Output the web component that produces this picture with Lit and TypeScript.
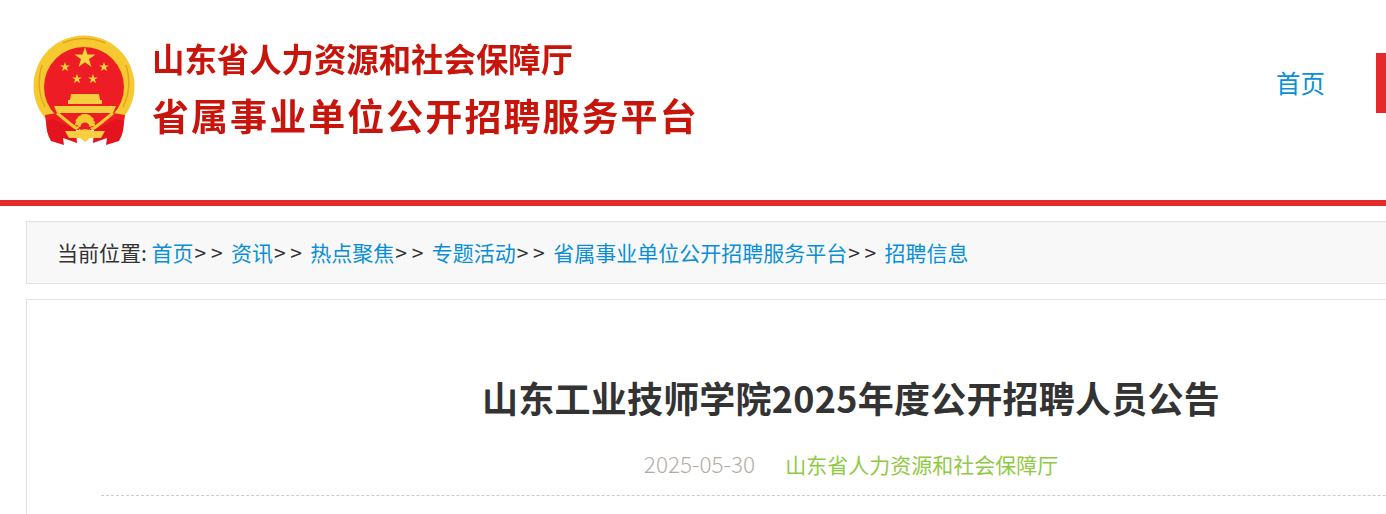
import { LitElement, html, css, svg } from "lit";
import { customElement } from "lit/decorators.js";

const star = (cx: number, cy: number, r: number) => {
  const pts: string[] = [];
  for (let i = 0; i < 10; i++) {
    const rad = i % 2 ? r * 0.382 : r;
    const a = -Math.PI / 2 + (i * Math.PI) / 5;
    pts.push(`${(cx + rad * Math.cos(a)).toFixed(2)},${(cy + rad * Math.sin(a)).toFixed(2)}`);
  }
  return svg`<polygon points=${pts.join(" ")} fill="#fbd33c"/>`;
};

const crumbs = ["首页", "资讯", "热点聚焦", "专题活动", "省属事业单位公开招聘服务平台", "招聘信息"];

@customElement("app-root")
export class AppRoot extends LitElement {
  static styles = css`
    :host {
      display: block;
      width: 1386px;
      height: 514px;
      overflow: hidden;
      background: #fff;
      font-family: "Noto Sans CJK SC", "Noto Sans", sans-serif;
    }
    .page { width: 1702px; }
    .header {
      display: flex;
      align-items: flex-start;
      height: 200px;
      width: 1386px;
    }
    .brand {
      display: flex;
      flex: 1;
      padding: 35px 0 0 33px;
      gap: 17px;
    }
    .emblem { width: 102px; height: 110px; flex: none; filter: blur(0.4px); }
    .names {
      display: flex;
      flex-direction: column;
      color: #c8150c;
      font-weight: 700;
      white-space: nowrap;
      gap: 7px;
      margin-top: -2px;
      filter: blur(0.3px);
    }
    .name1 { font-size: 32.4px; line-height: 50px; }
    .name2 { font-size: 37px; line-height: 52px; letter-spacing: 2.05px; margin-top: -1px; }
    .nav {
      display: flex;
      align-items: flex-start;
      padding-top: 53px;
      width: 110px;
      flex: none;
    }
    .nav a {
      color: #0a8fd6;
      font-size: 24.5px;
      line-height: 60px;
      width: 100px;
      flex: none;
    }
    .nav .active {
      width: 60px;
      height: 60px;
      flex: none;
      background: #e62a2b;
    }
    .rule { height: 6px; background: #e62a2b; }
    .crumb {
      margin: 15px 0 0 26px;
      width: 1650px;
      height: 63px;
      box-sizing: border-box;
      border: 1px solid #e2e2e2;
      background: #f8f8f8;
      padding-left: 30px;
      font-size: 21px;
      line-height: 60px;
      color: #333;
      white-space: nowrap;
    }
    .crumb a { color: #0a8fd6; }
    .sep { margin: 0 8.4px 0 1px; }
    .card {
      margin: 15px 0 0 26px;
      width: 1650px;
      height: 300px;
      box-sizing: border-box;
      border: 1px solid #e2e2e2;
      padding: 0 74px;
    }
    .title {
      margin: 69px 0 0;
      text-align: center;
      font-size: 36px;
      line-height: 56px;
      font-weight: 700;
      letter-spacing: 0.23px;
      color: #333;
    }
    .meta {
      display: flex;
      justify-content: center;
      align-items: baseline;
      gap: 30px;
      margin-top: 21px;
      padding-bottom: 14px;
      border-bottom: 1px dashed #ccc;
      font-size: 21px;
      line-height: 34px;
    }
    .date { color: #b3aca6; font-size: 22.5px; font-weight: 300; }
    .src { color: #8fca45; }
  `;

  render() {
    return html`
      <div class="page">
        <header class="header">
          <div class="brand">
            <svg class="emblem" viewBox="0 0 102 110" aria-hidden="true">
              <defs>
                <clipPath id="upper"><rect x="0" y="0" width="102" height="90"/></clipPath>
              </defs>
              <g clip-path="url(#upper)">
                <circle cx="51" cy="51" r="50.5" fill="#f5c92f"/>
                <path d="M9 30 Q2 52 12 72 M93 30 Q100 52 90 72 M30 8 Q51 -1 72 8" fill="none" stroke="#e2a41e" stroke-width="1.4"/>
              </g>
              <circle cx="51" cy="52" r="40" fill="#ee1c25"/>
              ${star(52, 23, 11)}
              ${star(32, 32, 5.2)}
              ${star(71, 32, 5.2)}
              ${star(44, 44, 5.2)}
              ${star(60, 44, 5.2)}
              <path d="M38 59 H66 L67 65 H69 V69 H35 V65 H37 Z" fill="#f7ce3e"/>
              <path d="M21 71 H83 L80 78 H24 Z" fill="#f7ce3e"/>
              <path d="M12 80 L24 78 H80 L92 80 L90 95 H14 Z" fill="#ee1c25"/>
              <path d="M24 78 Q36 88 44 94 M80 78 Q68 88 60 94" fill="none" stroke="#f5c92f" stroke-width="3"/>
              <circle cx="52" cy="89" r="8.5" fill="none" stroke="#f5c92f" stroke-width="3" stroke-dasharray="2.4 1.2"/>
              <path d="M43 88 A9 9 0 0 1 61 88 L58 92 H46 Z" fill="#f5c92f"/>
              <circle cx="52" cy="92" r="4.5" fill="#ee1c25"/>
              <path d="M14 86 L20 84 L43 95 L44 108 L30 103 L31 110 L18 106 Q12 96 14 86 Z" fill="#e3141d"/>
              <path d="M90 86 L84 84 L61 95 L60 108 L74 103 L73 110 L86 106 Q92 96 90 86 Z" fill="#e3141d"/>
              <path d="M32 96 L44 96 L52 94 L60 96 L72 96 L68 103 L57 103 L52 107 L47 103 L36 103 Z" fill="#f7ce3e"/>
            </svg>
            <div class="names">
              <div class="name1">山东省人力资源和社会保障厅</div>
              <div class="name2">省属事业单位公开招聘服务平台</div>
            </div>
          </div>
          <nav class="nav">
            <a>首页</a>
            <div class="active"></div>
          </nav>
        </header>
        <div class="rule"></div>
        <div class="crumb">当前位置: ${crumbs.map(
          (c, i) => html`<a>${c}</a>${i < crumbs.length - 1 ? html`<span class="sep">&gt; &gt;</span>` : ""}`
        )}</div>
        <section class="card">
          <h1 class="title">山东工业技师学院2025年度公开招聘人员公告</h1>
          <div class="meta">
            <span class="date">2025-05-30</span>
            <span class="src">山东省人力资源和社会保障厅</span>
          </div>
        </section>
      </div>
    `;
  }
}
